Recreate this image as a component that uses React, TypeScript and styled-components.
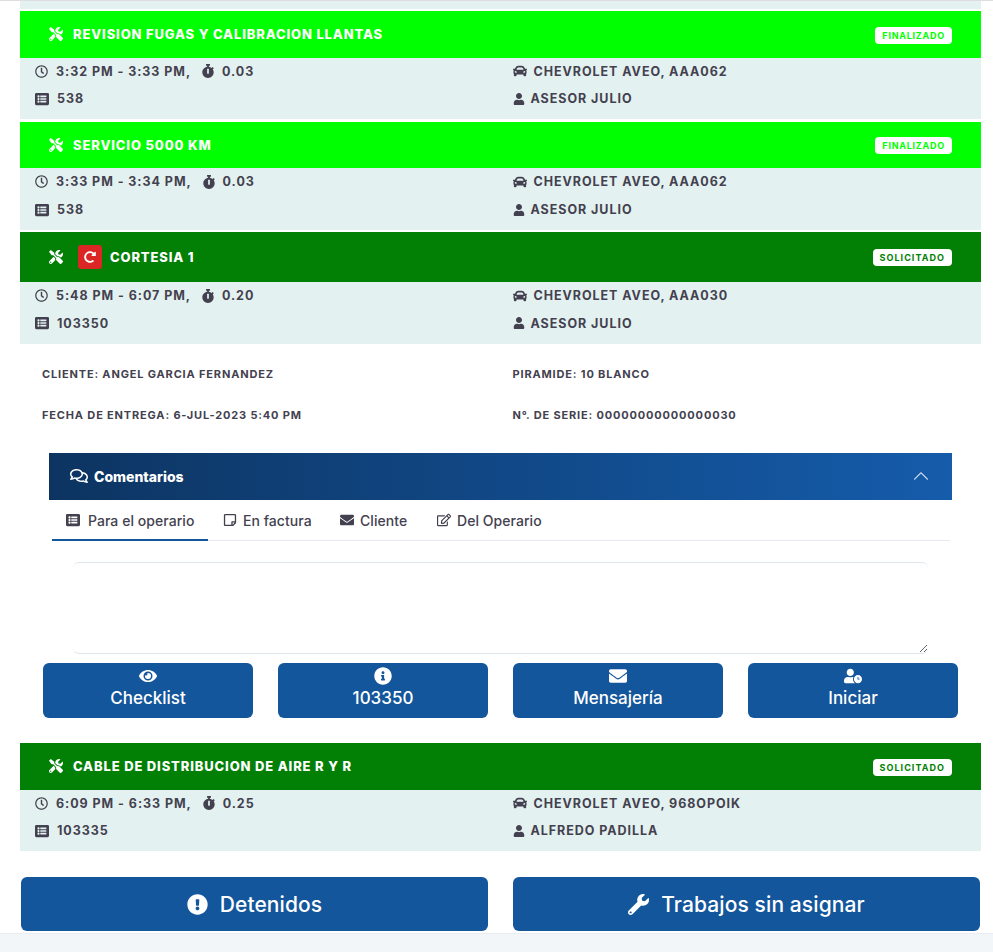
import React from 'react'
import styled, { createGlobalStyle } from 'styled-components'
import {
  FaTools,
  FaRegClock,
  FaStopwatch,
  FaListAlt,
  FaCar,
  FaUser,
  FaRedoAlt,
  FaRegComments,
  FaRegStickyNote,
  FaEnvelope,
  FaRegEdit,
  FaEye,
  FaInfoCircle,
  FaUserClock,
  FaExclamationCircle,
  FaWrench,
} from 'react-icons/fa'
import { ChevronUp } from 'lucide-react'

const GREEN = '#00ff00'
const DARK_GREEN = '#027f05'
const BLUE = '#14569b'
const TEXT = '#43414f'
const FONT = 'Inter, "Open Sans", sans-serif'

const GlobalStyle = createGlobalStyle`
  html, body {
    margin: 0;
    padding: 0;
    background: #ffffff;
    font-family: ${FONT};
  }
  * {
    box-sizing: border-box;
  }
`

const Page = styled.div`
  height: 952px;
  overflow: hidden;
  display: flex;
  flex-direction: column;
  border-top: 1px solid #dedede;
`
const Content = styled.div`
  flex: 1;
  padding: 0 12px 0 20px;
`
const TopStrip = styled.div`
  height: 8px;
  background: #e3f1f0;
  margin-bottom: 2px;
`
const Card = styled.section<{ $gap?: number }>`
  margin-bottom: ${({ $gap }) => $gap ?? 0}px;
`
const Header = styled.div<{ $color: string; $tall?: boolean }>`
  height: ${({ $tall }) => ($tall ? 50 : 46.6)}px;
  background: ${({ $color }) => $color};
  color: #ffffff;
  display: flex;
  align-items: center;
  padding: 0 29px;
`
const HeaderIcon = styled(FaTools)`
  width: 14px;
  height: 14px;
  margin-right: 10px;
  flex-shrink: 0;
`
const RepeatBadge = styled.span`
  width: 24px;
  height: 24px;
  margin: 0 8px 0 5px;
  border-radius: 3px;
  background: #dc2626;
  display: flex;
  align-items: center;
  justify-content: center;
  svg {
    width: 12px;
    height: 12px;
  }
`
const Title = styled.h3`
  flex: 1;
  margin: 0;
  font-size: 13px;
  font-weight: 800;
  letter-spacing: 0.85px;
  white-space: nowrap;
`
const Status = styled.span<{ $color: string; $tall?: boolean }>`
  height: 17px;
  margin-top: ${({ $tall }) => ($tall ? 1 : 2)}px;
  padding: 0 7px;
  border-radius: 4px;
  background: #ffffff;
  color: ${({ $color }) => $color};
  font-size: 9px;
  font-weight: 700;
  letter-spacing: ${({ $color }) => ($color === DARK_GREEN ? 1.05 : 0.75)}px;
  display: flex;
  align-items: center;
`
const Body = styled.div`
  height: 61.5px;
  background: #e3f1f0;
  padding-top: 0.3px;
  display: grid;
  grid-template-columns: 1fr 1fr;
  grid-template-rows: 26.5px 29px;
  color: ${TEXT};
`
const Cell = styled.div<{ $right?: boolean }>`
  display: flex;
  align-items: center;
  padding-left: ${({ $right }) => ($right ? 12 : 15)}px;
  font-size: 12.5px;
  font-weight: 700;
  letter-spacing: 0.95px;
  white-space: nowrap;
  svg {
    flex-shrink: 0;
    width: 14px;
    height: 14px;
  }
`
const ClockIcon = styled(FaRegClock)`
  && {
    width: 13px;
    height: 13px;
  }
`
const PersonIcon = styled(FaUser)`
  && {
    width: 12px;
    height: 12px;
  }
`
const IconGap = styled.span<{ $size: number }>`
  display: inline-block;
  width: ${({ $size }) => $size}px;
`
const Details = styled.div`
  display: grid;
  grid-template-columns: 1fr 1fr;
  grid-auto-rows: 41px;
  padding-top: 9.5px;
  height: 100px;
  color: ${TEXT};
`
const DetailText = styled.div<{ $right?: boolean }>`
  display: flex;
  align-items: center;
  padding-left: ${({ $right }) => ($right ? 12 : 22)}px;
  font-size: 11px;
  font-weight: 700;
  letter-spacing: 0.84px;
  white-space: nowrap;
`
const Comments = styled.div`
  margin: 9.4px 29px 0;
`
const CommentsHeader = styled.div`
  height: 47px;
  background: linear-gradient(90deg, #0d3461 0%, #155cab 100%);
  color: #ffffff;
  display: flex;
  align-items: center;
  padding: 0 18px 0 21px;
  font-size: 14px;
  font-weight: 800;
  svg:first-child {
    width: 18px;
    height: 18px;
    margin-right: 6px;
  }
`
const CommentsTitle = styled.span`
  flex: 1;
`
const Collapse = styled(ChevronUp)`
  opacity: 0.75;
`
const Tabs = styled.div`
  height: 41px;
  margin: 0 2px 0 3px;
  display: flex;
  border-bottom: 1px solid #e6e9ef;
`
const Tab = styled.div<{ $active?: boolean; $width: number }>`
  height: 41px;
  width: ${({ $width }) => $width}px;
  padding: ${({ $active }) => ($active ? '2px 0 0 14px' : '0 0 0 15px')};
  display: flex;
  align-items: center;
  gap: ${({ $active }) => ($active ? 8 : 6)}px;
  color: ${TEXT};
  font-size: 14px;
  font-weight: 500;
  letter-spacing: 0.05px;
  white-space: nowrap;
  border-bottom: ${({ $active }) => ($active ? `2px solid ${BLUE}` : 'none')};
  svg {
    width: 14px;
    height: 14px;
    flex-shrink: 0;
  }
`
const NoteField = styled.textarea`
  display: block;
  width: 855px;
  height: 92px;
  margin: 21px 0 9px 53px;
  padding: 8px 12px;
  background: #ffffff;
  border: none;
  border-top: 1px solid #dde6ed;
  border-bottom: 1px solid #dde6ed;
  border-radius: 6px;
  resize: vertical;
  outline: none;
`
const ActionGrid = styled.div`
  display: grid;
  grid-template-columns: repeat(4, 210px);
  column-gap: 25px;
  margin: 0 0 25px 23px;
`
const ActionButton = styled.button`
  height: 55px;
  border: none;
  border-radius: 6px;
  background: ${BLUE};
  color: #ffffff;
  font-family: ${FONT};
  font-size: 17px;
  line-height: 20px;
  font-weight: 500;
  display: flex;
  flex-direction: column;
  align-items: center;
  justify-content: flex-start;
  gap: 3px;
  padding: 4px 0 0;
  svg {
    width: auto;
    height: 18px;
  }
`
const FooterGrid = styled.div`
  display: grid;
  grid-template-columns: 467px 467px;
  column-gap: 25px;
  margin: 26px 0 0 1px;
`
const FooterButton = styled.button`
  height: 54px;
  border: none;
  border-radius: 6px;
  background: ${BLUE};
  color: #ffffff;
  font-family: ${FONT};
  font-size: 21px;
  letter-spacing: 0.1px;
  font-weight: 500;
  display: flex;
  align-items: center;
  justify-content: center;
  gap: 12px;
  svg {
    width: auto;
    height: 21px;
  }
`
const PageFooter = styled.div`
  height: 19px;
  background: #f3f6f9;
  border-top: 1px solid #e9edf2;
`

type Job = {
  title: string
  status: string
  color: string
  hours: string
  duration: string
  order: string
  car: string
  advisor: string
  repeated?: boolean
}

function JobCard({ job, gap }: { job: Job; gap?: number }) {
  return (
    <Card $gap={gap}>
      <Header $color={job.color} $tall={job.repeated}>
        <HeaderIcon />
        {job.repeated && (
          <RepeatBadge>
            <FaRedoAlt />
          </RepeatBadge>
        )}
        <Title>{job.title}</Title>
        <Status $color={job.color} $tall={job.repeated}>
          {job.status}
        </Status>
      </Header>
      <Body>
        <Cell>
          <ClockIcon />
          <IconGap $size={8} />
          {job.hours},
          <IconGap $size={10} />
          <FaStopwatch />
          <IconGap $size={7} />
          {job.duration}
        </Cell>
        <Cell $right>
          <FaCar />
          <IconGap $size={7} />
          {job.car}
        </Cell>
        <Cell>
          <FaListAlt />
          <IconGap $size={8} />
          {job.order}
        </Cell>
        <Cell $right>
          <PersonIcon />
          <IconGap $size={6} />
          {job.advisor}
        </Cell>
      </Body>
    </Card>
  )
}

export default function App() {
  return (
    <Page>
      <GlobalStyle />
      <Content>
        <TopStrip />
        <JobCard
          gap={2.6}
          job={{
            title: 'REVISION FUGAS Y CALIBRACION LLANTAS',
            status: 'FINALIZADO',
            color: GREEN,
            hours: '3:32 PM - 3:33 PM',
            duration: '0.03',
            order: '538',
            car: 'CHEVROLET AVEO, AAA062',
            advisor: 'ASESOR JULIO',
          }}
        />
        <JobCard
          gap={2.3}
          job={{
            title: 'SERVICIO 5000 KM',
            status: 'FINALIZADO',
            color: GREEN,
            hours: '3:33 PM - 3:34 PM',
            duration: '0.03',
            order: '538',
            car: 'CHEVROLET AVEO, AAA062',
            advisor: 'ASESOR JULIO',
          }}
        />
        <JobCard
          job={{
            title: 'CORTESIA 1',
            status: 'SOLICITADO',
            color: DARK_GREEN,
            hours: '5:48 PM - 6:07 PM',
            duration: '0.20',
            order: '103350',
            car: 'CHEVROLET AVEO, AAA030',
            advisor: 'ASESOR JULIO',
            repeated: true,
          }}
        />
        <Details>
          <DetailText>CLIENTE: ANGEL GARCIA FERNANDEZ</DetailText>
          <DetailText $right>PIRAMIDE: 10 BLANCO</DetailText>
          <DetailText>FECHA DE ENTREGA: 6-JUL-2023 5:40 PM</DetailText>
          <DetailText $right>N°. DE SERIE: 00000000000000030</DetailText>
        </Details>
        <Comments>
          <CommentsHeader>
            <FaRegComments />
            <CommentsTitle>Comentarios</CommentsTitle>
            <Collapse size={26} strokeWidth={1} />
          </CommentsHeader>
          <Tabs>
            <Tab $active $width={156}>
              <FaListAlt />
              Para el operario
            </Tab>
            <Tab $width={117}>
              <FaRegStickyNote />
              En factura
            </Tab>
            <Tab $width={97}>
              <FaEnvelope />
              Cliente
            </Tab>
            <Tab $width={130}>
              <FaRegEdit />
              Del Operario
            </Tab>
          </Tabs>
        </Comments>
        <NoteField />
        <ActionGrid>
          <ActionButton>
            <FaEye />
            Checklist
          </ActionButton>
          <ActionButton>
            <FaInfoCircle />
            103350
          </ActionButton>
          <ActionButton>
            <FaEnvelope />
            Mensajería
          </ActionButton>
          <ActionButton>
            <FaUserClock />
            Iniciar
          </ActionButton>
        </ActionGrid>
        <JobCard
          job={{
            title: 'CABLE DE DISTRIBUCION DE AIRE R Y R',
            status: 'SOLICITADO',
            color: DARK_GREEN,
            hours: '6:09 PM - 6:33 PM',
            duration: '0.25',
            order: '103335',
            car: 'CHEVROLET AVEO, 968OPOIK',
            advisor: 'ALFREDO PADILLA',
          }}
        />
        <FooterGrid>
          <FooterButton>
            <FaExclamationCircle />
            Detenidos
          </FooterButton>
          <FooterButton>
            <FaWrench />
            Trabajos sin asignar
          </FooterButton>
        </FooterGrid>
      </Content>
      <PageFooter />
    </Page>
  )
}
